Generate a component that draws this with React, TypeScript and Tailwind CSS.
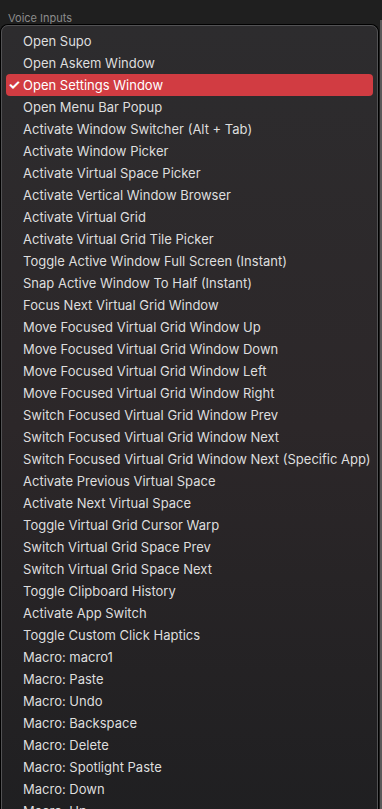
const items = [
  "Open Supo",
  "Open Askem Window",
  "Open Settings Window",
  "Open Menu Bar Popup",
  "Activate Window Switcher (Alt + Tab)",
  "Activate Window Picker",
  "Activate Virtual Space Picker",
  "Activate Vertical Window Browser",
  "Activate Virtual Grid",
  "Activate Virtual Grid Tile Picker",
  "Toggle Active Window Full Screen (Instant)",
  "Snap Active Window To Half (Instant)",
  "Focus Next Virtual Grid Window",
  "Move Focused Virtual Grid Window Up",
  "Move Focused Virtual Grid Window Down",
  "Move Focused Virtual Grid Window Left",
  "Move Focused Virtual Grid Window Right",
  "Switch Focused Virtual Grid Window Prev",
  "Switch Focused Virtual Grid Window Next",
  "Switch Focused Virtual Grid Window Next (Specific App)",
  "Activate Previous Virtual Space",
  "Activate Next Virtual Space",
  "Toggle Virtual Grid Cursor Warp",
  "Switch Virtual Grid Space Prev",
  "Switch Virtual Grid Space Next",
  "Toggle Clipboard History",
  "Activate App Switch",
  "Toggle Custom Click Haptics",
  "Macro: macro1",
  "Macro: Paste",
  "Macro: Undo",
  "Macro: Backspace",
  "Macro: Delete",
  "Macro: Spotlight Paste",
  "Macro: Down",
  "Macro: Up",
];

const selected = 2;

export default function App() {
  return (
    <div
      className="relative h-[809px] w-[382px] overflow-hidden bg-[#1f1f1f] text-[13px]"
      style={{ fontFamily: "Inter, 'Noto Sans', sans-serif" }}
    >
      {/* settings label peeking above the popup */}
      <div className="h-[25px] px-2 pt-[11px] text-[11px] leading-[14px] text-[#8c8c8c]">
        Voice Inputs
      </div>

      {/* panel edge visible on the right, behind the menu */}
      <div className="absolute right-0 top-[20px] h-[800px] w-[2px] bg-[#5a5a5a]" />

      {/* popup menu */}
      <div className="absolute left-[1px] top-[25px] w-[377px] rounded-[7px] border border-[#525254] bg-gradient-to-b from-[#2d2c2e] via-[#2c2729] to-[#1f1f21] px-[4px] py-[4px] shadow-[0_0_0_1px_#000]">
        <ul className="flex flex-col">
          {items.map((label, i) => {
            const on = i === selected;
            return (
              <li
                key={label}
                className={
                  on
                    ? "flex h-[22px] items-center rounded-[4px] bg-[#d13c42] text-white"
                    : "flex h-[22px] items-center text-[#dedede]"
                }
              >
                <span className="w-[17px] shrink-0 pl-[2px] text-[14px] font-bold leading-none">
                  {on ? "✓" : ""}
                </span>
                <span className="whitespace-nowrap leading-none">{label}</span>
              </li>
            );
          })}
        </ul>
      </div>
    </div>
  );
}
